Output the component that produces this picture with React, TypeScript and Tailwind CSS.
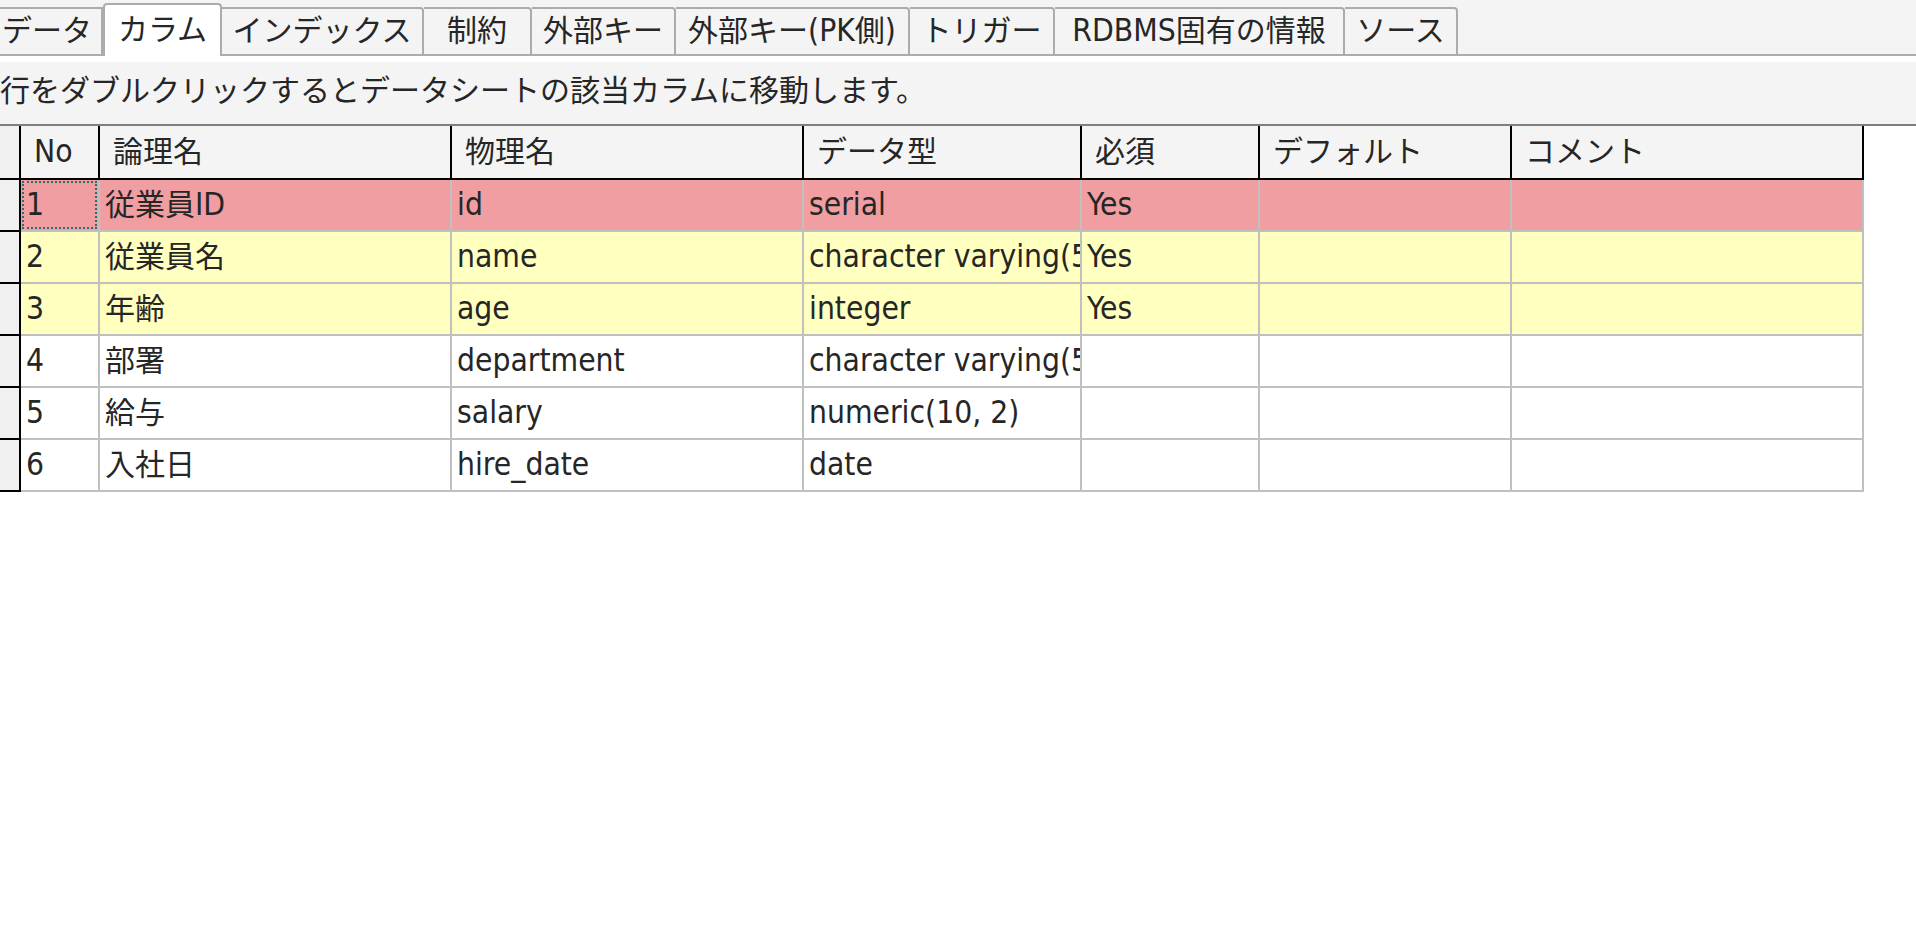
import React from 'react'

const FONT = "font-['DejaVu_Sans','Noto_Sans_CJK_JP',sans-serif]"

interface Tab {
  label: string
  width: string
  active?: boolean
  first?: boolean
}

const tabs: Tab[] = [
  { label: 'データ', width: 'w-[103px]', first: true },
  { label: 'カラム', width: 'w-[119px]', active: true },
  { label: 'インデックス', width: 'w-[202px]' },
  { label: '制約', width: 'w-[108px]' },
  { label: '外部キー', width: 'w-[144px]' },
  { label: '外部キー(PK側)', width: 'w-[234px]' },
  { label: 'トリガー', width: 'w-[145px]' },
  { label: 'RDBMS固有の情報', width: 'w-[290px]' },
  { label: 'ソース', width: 'w-[113px]' }
]

interface Column {
  title: string
  width: string
}

const columns: Column[] = [
  { title: 'No', width: 'w-[79px]' },
  { title: '論理名', width: 'w-[352px]' },
  { title: '物理名', width: 'w-[352px]' },
  { title: 'データ型', width: 'w-[278px]' },
  { title: '必須', width: 'w-[178px]' },
  { title: 'デフォルト', width: 'w-[252px]' },
  { title: 'コメント', width: 'w-[352px]' }
]

interface ColumnRow {
  no: number
  logical: string
  physical: string
  type: string
  required: string
  bg: string
}

const rows: ColumnRow[] = [
  { no: 1, logical: '従業員ID', physical: 'id', type: 'serial', required: 'Yes', bg: 'bg-[#f09ea2]' },
  { no: 2, logical: '従業員名', physical: 'name', type: 'character varying(50)', required: 'Yes', bg: 'bg-[#ffffc0]' },
  { no: 3, logical: '年齢', physical: 'age', type: 'integer', required: 'Yes', bg: 'bg-[#ffffc0]' },
  { no: 4, logical: '部署', physical: 'department', type: 'character varying(50)', required: '', bg: 'bg-white' },
  { no: 5, logical: '給与', physical: 'salary', type: 'numeric(10, 2)', required: '', bg: 'bg-white' },
  { no: 6, logical: '入社日', physical: 'hire_date', type: 'date', required: '', bg: 'bg-white' }
]

// latin runs are set in a narrower, taller face than the kana/kanji
function Txt({ text }: { text: string }) {
  const parts = text.split(/([\x20-\x7e]+)/).filter(Boolean)
  return (
    <>
      {parts.map((p, i) =>
        /^[\x20-\x7e]+$/.test(p) ? (
          <span
            key={i}
            className="font-['DejaVu_Sans_Condensed','DejaVu_Sans',sans-serif] text-[31.5px] whitespace-pre"
          >
            {p}
          </span>
        ) : (
          <span key={i}>{p}</span>
        )
      )}
    </>
  )
}

function TabStrip() {
  return (
    <div className="flex h-[56px] items-end bg-[#f4f4f4]">
      {tabs.map((tab) =>
        tab.active ? (
          <div
            key={tab.label}
            className={`${tab.width} flex h-[53px] shrink-0 items-center justify-center rounded-t-[4px] border-x-2 border-t-2 border-[#acacac] bg-white pb-[2px]`}
          >
            <Txt text={tab.label} />
          </div>
        ) : (
          <div
            key={tab.label}
            className={`${tab.width} flex h-[49px] shrink-0 items-center border-b-2 border-r-2 border-t-2 border-[#acacac] bg-[#f4f4f4] pb-[2px] ${
              tab.first ? 'justify-start pl-[2px]' : 'justify-center rounded-tr-[4px]'
            }`}
          >
            <Txt text={tab.label} />
          </div>
        )
      )}
      <div className="h-[2px] flex-1 bg-[#acacac]" />
    </div>
  )
}

export default function App() {
  return (
    <div className={`${FONT} min-h-screen w-full bg-white text-[30px] leading-none text-[#262626]`}>
      <TabStrip />

      {/* hint bar */}
      <div className="mt-[6px] flex h-[64px] items-start border-b-2 border-[#7e7e7e] bg-[#f4f4f4] pt-[14px]">
        行をダブルクリックするとデータシートの該当カラムに移動します。
      </div>

      {/* columns grid */}
      <div className="flex flex-col">
        <div className="flex h-[54px]">
          <div className="w-[21px] shrink-0 border-b-2 border-r-2 border-black bg-[#f0f0f0]" />
          {columns.map((col) => (
            <div
              key={col.title}
              className={`${col.width} flex shrink-0 items-center border-b-2 border-r-2 border-black bg-[#f4f4f4] pl-[13px]`}
            >
              <Txt text={col.title} />
            </div>
          ))}
        </div>

        {rows.map((row, idx) => {
          const cells = [String(row.no), row.logical, row.physical, row.type, row.required, '', '']
          return (
            <div key={row.no} className="flex h-[52px]">
              <div className="w-[21px] shrink-0 border-b-2 border-r-2 border-black bg-[#f0f0f0]" />
              {cells.map((text, i) => (
                <div
                  key={i}
                  className={`${columns[i].width} ${row.bg} relative flex shrink-0 items-center overflow-hidden whitespace-nowrap border-b-2 border-r-2 border-[#c0c0c0] pl-[5px]`}
                >
                  {idx === 0 && i === 0 && (
                    <div className="pointer-events-none absolute inset-[1px] border-2 border-dotted border-[#2e6e6a]" />
                  )}
                  <Txt text={text} />
                </div>
              ))}
            </div>
          )
        })}
      </div>
    </div>
  )
}
